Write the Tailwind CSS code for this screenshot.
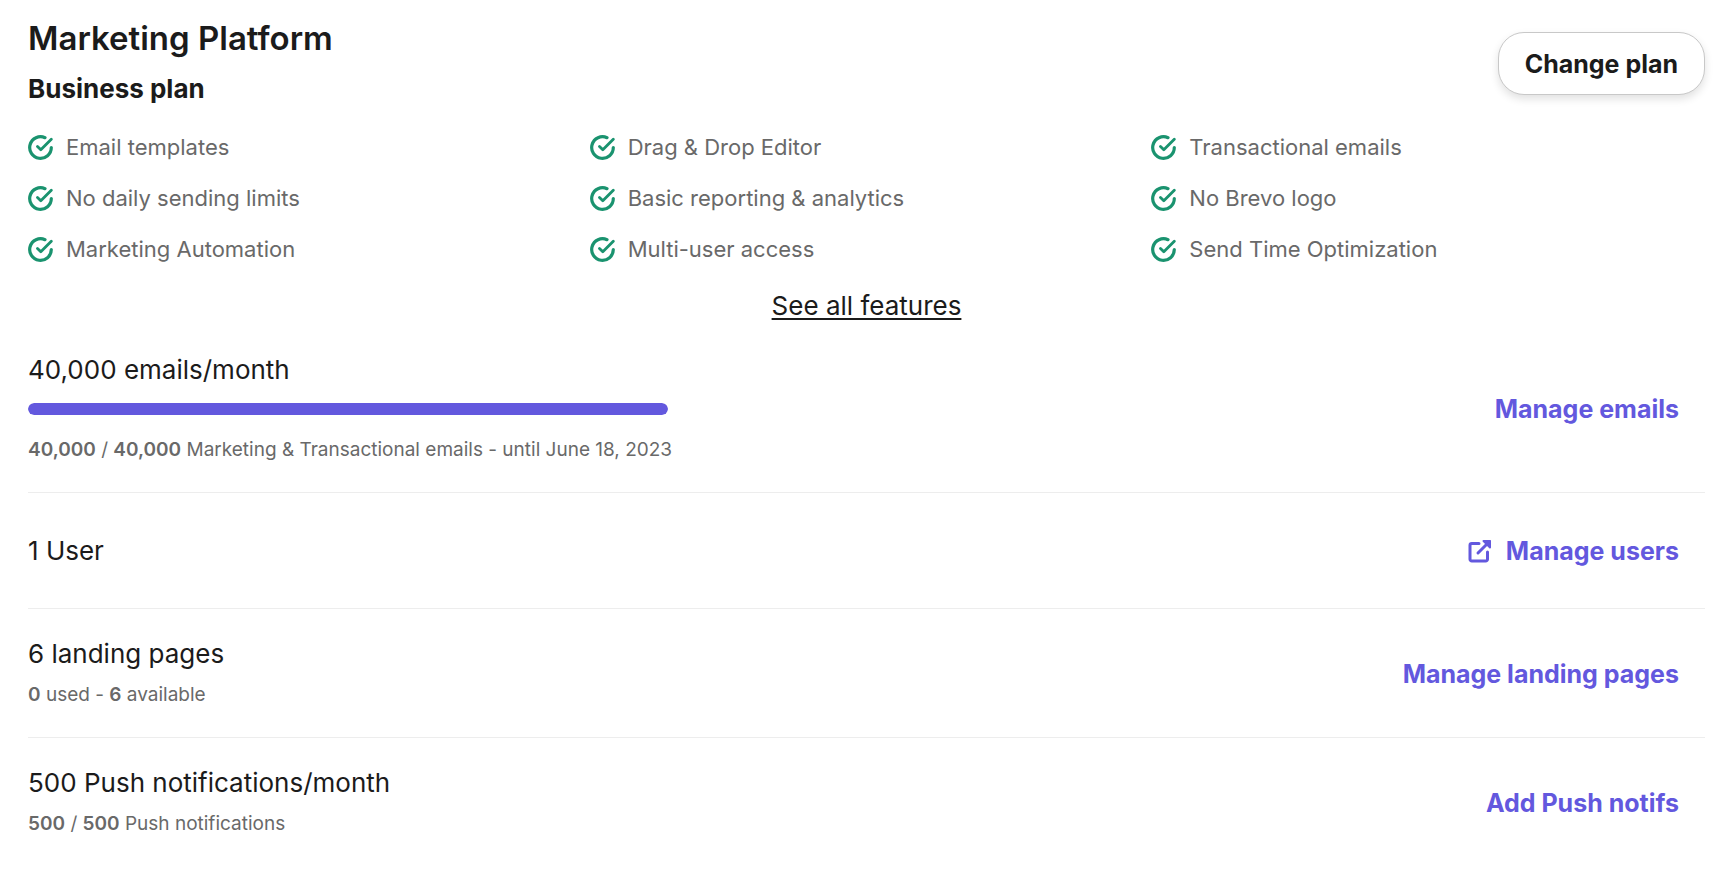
<!DOCTYPE html>
<html lang="en">
<head>
  <meta charset="UTF-8" />
  <title>Marketing Platform</title>
  <meta name="viewport" content="width=device-width, initial-scale=1.0" />
  <script src="https://cdn.jsdelivr.net/npm/@tailwindcss/browser@4"></script>
</head>
<body class="bg-white text-[#1b1b1b] font-['Inter',sans-serif]">
  <!-- shared icon -->
  <svg class="hidden">
    <symbol id="check" viewBox="0 0 25 25">
      <g fill="none" stroke="currentColor" stroke-width="3.2" stroke-linecap="round" stroke-linejoin="round">
        <path d="M17 2.700A10.800 10.800 0 1 0 23.300 12.500" />
        <path d="M9.500 11.500l3.300 3.300L23.300 4.200" stroke-width="2.8" />
      </g>
    </symbol>
  </svg>

  <main class="pl-7 pr-[25px] pt-[18px] pb-6">
    <header class="flex items-start justify-between">
      <div>
        <h1 class="text-[33px] leading-10 font-semibold">Marketing Platform</h1>
        <h2 class="mt-[15px] text-[26px] leading-8 font-bold">Business plan</h2>
      </div>
      <button type="button" class="mt-3.5 h-[63px] px-[26px] text-[25px] leading-8 font-bold bg-white border border-[#c8c8c8] rounded-[26px] shadow-[0_4px_8px_rgba(0,0,0,0.12)]">Change plan</button>
    </header>

    <ul class="mt-7 grid grid-cols-3 gap-x-2 gap-y-[23px] text-[22px] leading-7 text-[#696969]">
      <li class="flex items-center gap-[13px]"><svg class="w-[25px] h-[25px] text-[#1a936f]"><use href="#check" /></svg>Email templates</li>
      <li class="flex items-center gap-[13px]"><svg class="w-[25px] h-[25px] text-[#1a936f]"><use href="#check" /></svg>Drag &amp; Drop Editor</li>
      <li class="flex items-center gap-[13px]"><svg class="w-[25px] h-[25px] text-[#1a936f]"><use href="#check" /></svg>Transactional emails</li>
      <li class="flex items-center gap-[13px]"><svg class="w-[25px] h-[25px] text-[#1a936f]"><use href="#check" /></svg>No daily sending limits</li>
      <li class="flex items-center gap-[13px]"><svg class="w-[25px] h-[25px] text-[#1a936f]"><use href="#check" /></svg>Basic reporting &amp; analytics</li>
      <li class="flex items-center gap-[13px]"><svg class="w-[25px] h-[25px] text-[#1a936f]"><use href="#check" /></svg>No Brevo logo</li>
      <li class="flex items-center gap-[13px]"><svg class="w-[25px] h-[25px] text-[#1a936f]"><use href="#check" /></svg>Marketing Automation</li>
      <li class="flex items-center gap-[13px]"><svg class="w-[25px] h-[25px] text-[#1a936f]"><use href="#check" /></svg>Multi-user access</li>
      <li class="flex items-center gap-[13px]"><svg class="w-[25px] h-[25px] text-[#1a936f]"><use href="#check" /></svg>Send Time Optimization</li>
    </ul>

    <div class="mt-[27px] flex justify-center text-[26px] leading-8">
      <a href="#" class="underline decoration-2 underline-offset-3">See all features</a>
    </div>

    <section class="mt-8 pb-7 flex items-center justify-between border-b border-[#ededed]">
      <div>
        <h3 class="text-[26px] leading-8">40,000 emails/month</h3>
        <div role="progressbar" aria-label="Emails left" aria-valuenow="40000" aria-valuemax="40000" class="mt-[17px] w-[640px] h-3 rounded-full bg-[#e6e6fa] overflow-hidden">
          <div class="h-full rounded-full bg-[#6358de]" style="width: 100%"></div>
        </div>
        <p class="mt-[21px] text-[19px] leading-7 text-[#696969]"><b class="font-semibold">40,000</b> / <b class="font-semibold">40,000</b> Marketing &amp; Transactional emails - until June 18, 2023</p>
      </div>
      <a href="#" class="pr-[26px] text-[25px] leading-8 font-bold text-[#6358de]">Manage emails</a>
    </section>

    <section class="min-h-[116px] py-7 flex items-center justify-between border-b border-[#ededed]">
      <h3 class="text-[26px] leading-8">1 User</h3>
      <a href="#" class="pr-[26px] flex items-center gap-3.5 text-[25px] leading-8 font-bold text-[#6358de]">
        <svg class="w-6 h-6" viewBox="0 0 24 24" fill="none" stroke="currentColor" stroke-width="3" stroke-linecap="round" stroke-linejoin="round">
          <path d="M11 4.500H3.800A1.800 1.800 0 0 0 2 6.300V20.200A1.800 1.800 0 0 0 3.800 22H17.700A1.800 1.800 0 0 0 19.500 20.200V13" />
          <path d="M10 14L21.500 2.500" />
          <path d="M15.500 2H22V8.500z" fill="currentColor" stroke-width="2" />
        </svg>
        Manage users
      </a>
    </section>

    <section class="pt-[29px] pb-7 flex items-center justify-between border-b border-[#ededed]">
      <div>
        <h3 class="text-[26px] leading-8">6 landing pages</h3>
        <p class="mt-[11px] text-[19px] leading-7 text-[#696969]"><b class="font-semibold">0</b> used - <b class="font-semibold">6</b> available</p>
      </div>
      <a href="#" class="pr-[26px] text-[25px] leading-8 font-bold text-[#6358de]">Manage landing pages</a>
    </section>

    <section class="pt-[29px] flex items-center justify-between">
      <div>
        <h3 class="text-[26px] leading-8">500 Push notifications/month</h3>
        <p class="mt-[11px] text-[19px] leading-7 text-[#696969]"><b class="font-semibold">500</b> / <b class="font-semibold">500</b> Push notifications</p>
      </div>
      <a href="#" class="pr-[26px] text-[25px] leading-8 font-bold text-[#6358de]">Add Push notifs</a>
    </section>
  </main>
</body>
</html>
